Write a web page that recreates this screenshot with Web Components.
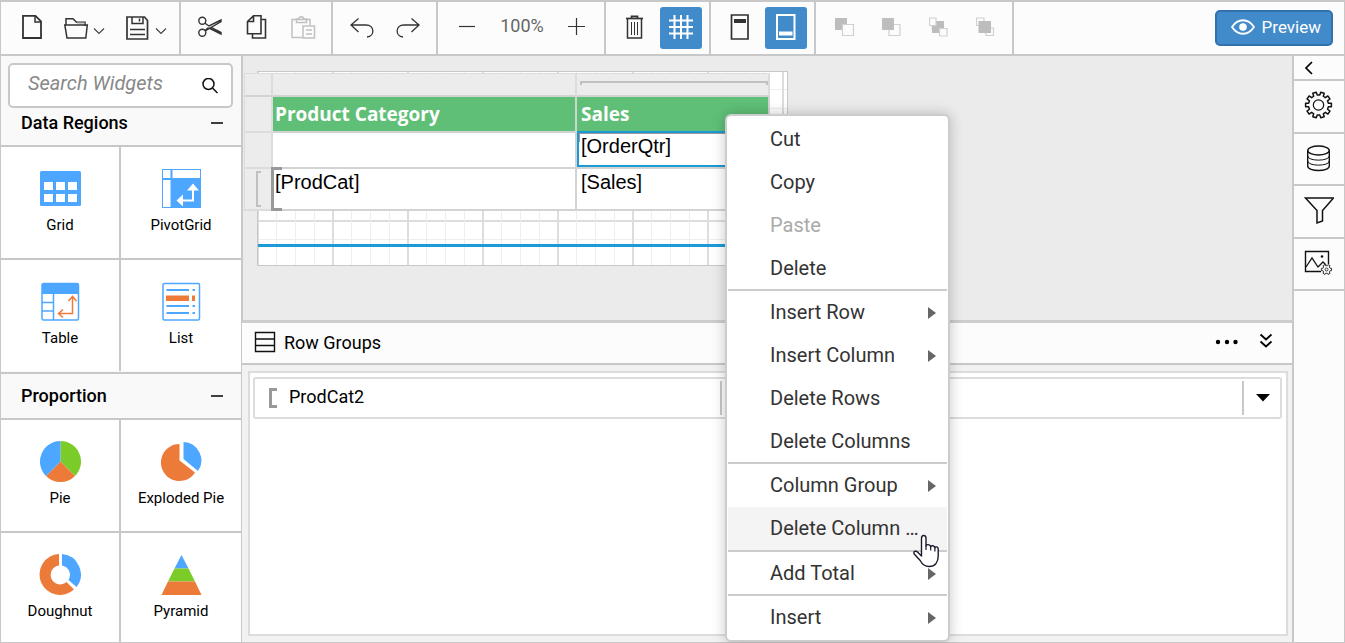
<!DOCTYPE html>
<html lang="en">
<head>
<meta charset="utf-8">
<title>Report Designer</title>
<style>
  html, body { height: 100%; margin: 0; }
  body {
    font-family: Roboto, "Liberation Sans", sans-serif;
    color: #000;
    --line: #c8c8c8;
    --soft: #dcdcdc;
    --bar: #fcfcfc;
    --accent: #428bca;
    --select: #1c9ad6;
    overflow: hidden;
  }
</style>
</head>
<body>
<report-designer></report-designer>

<script>
const svg = (w, h, body) =>
  `<svg width="${w}" height="${h}" viewBox="0 0 ${w} ${h}" fill="none" aria-hidden="true">${body}</svg>`;

/* Outline of a cog wheel with n teeth */
function cog(cx, cy, outer, inner, n) {
  const pts = [];
  const step = Math.PI * 2 / n;
  for (let i = 0; i < n; i++) {
    const a = i * step + step / 2 - Math.PI / 2;
    [[-0.30, inner], [-0.22, outer], [0.22, outer], [0.30, inner]].forEach(([t, r]) => {
      pts.push((cx + r * Math.cos(a + t * step)).toFixed(2) + ' ' + (cy + r * Math.sin(a + t * step)).toFixed(2));
    });
  }
  return 'M' + pts.join('L') + 'Z';
}

const ICONS = {
  'new': svg(22, 26, '<path d="M2 1.800h12.500L20 7.300V24H2z" stroke="#333" stroke-width="1.800"/><path d="M14 2v6h6" stroke="#333" stroke-width="1.500"/>'),
  open: svg(42, 26, '<path d="M3 11V4.800h7l3.500 3.500H22V12" stroke="#333" stroke-width="1.500"/><path d="M12 6.500l3 4h6.500v-2h-8z" fill="#ccc"/><path d="M1.800 11h22.500l-1.500 13H4z" stroke="#333" stroke-width="1.500"/><path d="M31 14.500l5 5 5-5" stroke="#444" stroke-width="1.200"/>'),
  save: svg(42, 26, '<path d="M2 3h17.500l3 3.500V25H2z" stroke="#333" stroke-width="1.700"/><path d="M7 3v6.500h11V3" stroke="#333" stroke-width="1.500"/><path d="M14.500 4.500v3" stroke="#333" stroke-width="1.500"/><path d="M5 15.500h15M5 20.500h15" stroke="#333" stroke-width="1.500"/><path d="M31 14.500l5 5 5-5" stroke="#444" stroke-width="1.200"/>'),
  cut: svg(24, 24, '<g stroke="#333" stroke-width="1.400"><circle cx="4.300" cy="5.800" r="3.500"/><circle cx="4.300" cy="17.700" r="3.500"/><path d="M7 8.200l4 2.800L23 5v1.500L7.200 16M7 15.500l3.500-3M12.500 12L23 17.500V19l-12-6"/></g>'),
  copy: svg(22, 26, '<g stroke="#333" stroke-width="1.600"><path d="M8.500 1.800H16v18H2.500V7.500zM8.500 2v5.500h-6"/><path d="M16.500 5.500h4V24H7.500v-4"/></g>'),
  paste: svg(26, 26, '<g stroke="#c0c0c0" stroke-width="1.500"><path d="M12 23.500H2V5.500h18V11"/><path d="M6.500 8.500V5H9a2.200 2.200 0 0 1 4.500 0h3v3.500z"/><path d="M13 12h11.500v12H13zM16 16h6M16 20h6"/></g>'),
  undo: svg(24, 24, '<path d="M8.500 3.500L1 10l7.500 7M1 10h15c9 0 9 11.500 1 12" stroke="#333" stroke-width="1.300"/>'),
  redo: svg(24, 24, '<path d="M15.500 3.500L23 10l-7.500 7M23 10H8c-9 0-9 11.500-1 12" stroke="#333" stroke-width="1.300"/>'),
  minus: svg(18, 18, '<path d="M1 8.500h16" stroke="#333" stroke-width="1.200"/>'),
  plus: svg(18, 18, '<path d="M0 8.500h17M8.500 0v17" stroke="#333" stroke-width="1.200"/>'),
  trash: svg(20, 26, '<path d="M1 4.500h17" stroke="#333" stroke-width="1.700"/><path d="M6.500 4V2.300h6V4" stroke="#333" stroke-width="1.700"/><path d="M2.500 5v19h14V5" stroke="#333" stroke-width="1.500"/><path d="M6.500 8v13M9.500 8v13M12.500 8v13" stroke="#333" stroke-width="1"/>'),
  grid: svg(26, 26, '<path d="M6.500 1v24M13 1v24M19.500 1v24M1 6.500h24M1 13h24M1 19.500h24" stroke="#fff" stroke-width="2"/>'),
  pagehead: svg(22, 28, '<path d="M2.500 2h16.500V26H2.500z" stroke="#333" stroke-width="1.700"/><path d="M5 6h12v4H5z" fill="#333"/>'),
  pagefoot: svg(22, 28, '<path d="M2 2h17.500v24H2z" stroke="#fff" stroke-width="2"/><path d="M4 18.500h13.500v4H4z" fill="#fff"/>'),
  order1: svg(20, 20, '<path d="M0 1h12v12H0z" fill="#bdbdbd"/><path d="M7.500 7.500h11v11h-11z" fill="#fcfcfc" stroke="#d0d0d0" stroke-width="1.200"/>'),
  order2: svg(20, 20, '<path d="M7 7.500h11v11H7z" stroke="#d0d0d0" stroke-width="1.200"/><path d="M0 1h12v12H0z" fill="#bdbdbd"/>'),
  order3: svg(20, 20, '<path d="M2.500 4H15v12H3z" fill="#bdbdbd"/><path d="M.5 1H7v7.500H.5zM10.500 11.500H18V19h-7.500z" fill="#fcfcfc" stroke="#d0d0d0" stroke-width="1.200"/>'),
  order4: svg(20, 20, '<path d="M.5 1H8v7.500H.5zM10 11h7.500v7.500H10z" stroke="#d0d0d0" stroke-width="1.200"/><path d="M2.500 4H15v12H2.500z" fill="#bdbdbd"/>'),
  eye: svg(24, 16, '<path d="M1 8C7-1 17-1 23 8 17 17 7 17 1 8z" stroke="#fff" stroke-width="1.800"/><circle cx="12" cy="8" r="3.800" fill="#fff"/>'),
  search: svg(16, 16, '<circle cx="6.500" cy="6" r="5.500" stroke="#111" stroke-width="1.500"/><path d="M10.500 10l5 5" stroke="#111" stroke-width="1.500"/>'),
  dash: svg(14, 4, '<path d="M1 2h12" stroke="#111" stroke-width="1.600"/>'),
  back: svg(10, 14, '<path d="M8 1L2 7l6 6" stroke="#000" stroke-width="1.700"/>'),
  gear: svg(30, 30, `<path d="${cog(14.5, 14, 13, 10, 10)}" stroke="#111" stroke-width="1.500" stroke-linejoin="round"/><circle cx="14.500" cy="14" r="5.200" stroke="#111" stroke-width="1.200"/>`),
  database: svg(30, 30, '<g stroke="#111" stroke-width="1.400"><ellipse cx="14.500" cy="6.500" rx="10.800" ry="4.500"/><path d="M3.700 6.500V22c0 6 21.600 6 21.600 0V6.500"/><path d="M3.700 12c0 5.500 21.600 5.500 21.600 0M3.700 17c0 5.500 21.600 5.500 21.600 0" stroke-width="1"/></g>'),
  funnel: svg(30, 30, '<path d="M1.500 2h28L18.500 14.500v10.500l-5.500 2V14.500z" stroke="#111" stroke-width="1.500"/>'),
  picture: svg(30, 30, `<path d="M17 22.500H1.500v-20h23V15" stroke="#111" stroke-width="1.400"/><path d="M2 18l6-9 6 9 5-5 3 3" stroke="#111" stroke-width="1.300"/><circle cx="18" cy="7.500" r="1.300" fill="#111"/><path d="${cog(22.5, 20.5, 5.2, 3.8, 6)}" stroke="#333" fill="#fcfcfc" stroke-width="1"/><circle cx="22.500" cy="20.500" r="1.500" stroke="#333"/>`),
  rows: svg(22, 22, '<path d="M1.500 1.500h19v19h-19zM1.500 8h19M1.500 14.500h19" stroke="#111" stroke-width="1.400"/>'),
  dots: svg(24, 6, '<g fill="#000"><circle cx="3" cy="3" r="2.200"/><circle cx="12" cy="3" r="2.200"/><circle cx="20.500" cy="3" r="2.200"/></g>'),
  collapse: svg(14, 16, '<path d="M1.500 1.500l5.500 5 5.500-5M1.500 8.500l5.500 5 5.500-5" stroke="#000" stroke-width="1.800"/>'),
  caret: svg(14, 8, '<path d="M0 0h14L7 7.500z" fill="#000"/>'),
  arrow: svg(8, 12, '<path d="M0 0l8 6-8 6z" fill="#666"/>'),
  bracket: svg(8, 20, '<path d="M8 1.500H1.500v17H8" stroke="#999" stroke-width="3"/>'),

  wGrid: svg(42, 42, '<rect x="1" y="3" width="41" height="35" rx="1.500" fill="#4da6ff"/><path d="M5 14h9v8H5zM17 14h9v8h-9zM29 14h9v8h-9zM5 26h9v8H5zM17 26h9v8h-9zM29 26h9v8h-9z" fill="#fff"/>'),
  wPivot: svg(42, 42, '<path d="M2 1h39v39H2z" fill="#4da6ff"/><path d="M3 2h7.500v8H3zM12.500 2H40v8H12.500zM3 12h7.500v27H3z" fill="#fff"/><path d="M33 19v13.500H22" stroke="#fff" stroke-width="2"/><path d="M33 15.500l6 7H27zM16.500 32.500l6.500-6v12z" fill="#fff"/>'),
  wTable: svg(42, 42, '<rect x="3" y="2.500" width="36.500" height="36.500" rx="1.500" stroke="#4da6ff" stroke-width="1.500"/><path d="M3 3h36.500v10H3z" fill="#4da6ff"/><path d="M14.500 13v26M3 21.500h11.500M3 30h11.500" stroke="#4da6ff" stroke-width="1.500"/><path d="M33.500 16v16.500H20M29.500 20l4-4.500 4 4.500M24 28.500l-4.500 4 4.500 4" stroke="#ee7a38" stroke-width="1.500"/>'),
  wList: svg(42, 42, '<rect x="3" y="2.500" width="36.500" height="36.500" rx="1.500" stroke="#4da6ff" stroke-width="1.500"/><path d="M6.500 9H29M32.500 9h2.500M6.500 25H29M32.500 25h2.500M6.500 32H29M32.500 32h2.500" stroke="#4da6ff" stroke-width="2"/><path d="M6 14.500h23v5.500H6zM32 14.500h3v5.500h-3z" fill="#ee7a38"/>'),
  wPie: svg(42, 42, '<g transform="translate(.500)"><path d="M21 20.500V0a20.500 20.500 0 0 1 14.500 35z" fill="#7bcc28"/><path d="M21 20.500L35.500 35a20.500 20.500 0 0 1-29 0z" fill="#ec7a38"/><path d="M21 20.500L6.500 35A20.500 20.500 0 0 1 21 0z" fill="#4da6ff"/></g>'),
  wExploded: svg(42, 42, '<path d="M19.500 3v16.500l15.500 12A18.500 18.500 0 1 1 19.500 3z" fill="#ec7a38"/><path d="M23.500 1a18.500 18.500 0 0 1 14.500 29L23.500 18z" fill="#4da6ff"/>'),
  wDoughnut: svg(42, 42, '<g transform="translate(1)"><path d="M19 0v11.500A9.500 9.500 0 1 0 26.500 28l7.500 7.500A20.500 20.500 0 1 1 19 0z" fill="#ec7a38"/><path d="M22 0a20.500 20.500 0 0 1 14.500 33L28.500 26A9.500 9.500 0 0 0 22 11.500z" fill="#4da6ff"/></g>'),
  wPyramid: svg(42, 42, '<path d="M21.500 1l7 13.500h-14z" fill="#4da6ff"/><path d="M14.500 14.500h14l6.500 13H8z" fill="#7bcc28"/><path d="M8 27.500h27l6.500 13.500h-40z" fill="#ec7a38"/>')
};

function define(name, render) {
  customElements.define(name, class extends HTMLElement {
    constructor() {
      super();
      this.attachShadow({ mode: 'open' });
    }
    connectedCallback() {
      if (this.shadowRoot.childNodes.length) return;
      const t = document.createElement('template');
      t.innerHTML = render(this);
      this.shadowRoot.append(t.content.cloneNode(true));
    }
  });
}

const RESET = `
  *, *::before, *::after { box-sizing: border-box; }
  button { font: inherit; color: inherit; background: none; border: 0; padding: 0; margin: 0; cursor: pointer; }
  svg { display: block; flex: none; }
`;

/* ---------- toolbar ---------- */
define('tool-button', el => `
  <style>${RESET}
    :host { display: block; }
    button { display: flex; align-items: center; justify-content: center; height: 42px; padding-bottom: 2px; border-radius: 3px; }
    :host([active]) button { width: 42px; background: var(--accent); }
  </style>
  <button type="button" aria-label="${el.getAttribute('label')}" ${el.hasAttribute('disabled') ? 'disabled' : ''}>${ICONS[el.getAttribute('icon')]}</button>`);

define('tool-group', () => `
  <style>${RESET}
    :host { display: flex; align-items: center; height: 52px; border-right: 2px solid var(--line); box-sizing: border-box; }
  </style>
  <slot></slot>`);

define('preview-button', () => `
  <style>${RESET}
    :host { display: block; margin-left: auto; margin-right: 11px; }
    button { display: flex; align-items: center; gap: 7px; height: 36px; padding: 0 10px 2px 14px; border: 2px solid #2f72ad; border-radius: 5px;
      background: var(--accent); color: #fff; font-size: 17px; line-height: 20px; }
  </style>
  <button type="button">${ICONS.eye}<span><slot></slot></span></button>`);

define('tool-bar', () => `
  <style>${RESET}
    :host { display: flex; align-items: center; height: 54px; background: var(--bar); border-bottom: 2px solid var(--line); box-sizing: border-box; }
    .file { padding-left: 20px; padding-right: 12px; gap: 20px; }
    .clip { padding-left: 17px; padding-right: 15px; gap: 23px; }
    .hist { padding-left: 17px; padding-right: 16px; gap: 22px; }
    .zoom { padding-left: 20px; padding-right: 18px; gap: 24px; }
    .edit { padding-left: 19px; padding-right: 7px; gap: 15px; }
    .page { padding-left: 18px; padding-right: 7px; gap: 14px; }
    .order { padding-left: 19px; padding-right: 16px; gap: 27px; }
    output { width: 44px; padding-bottom: 4px; text-align: center; font-size: 18px; line-height: 20px; color: #666; white-space: nowrap; }
  </style>
  <tool-group class="file">
    <tool-button icon="new" label="New"></tool-button>
    <tool-button icon="open" label="Open"></tool-button>
    <tool-button icon="save" label="Save"></tool-button>
  </tool-group>
  <tool-group class="clip">
    <tool-button icon="cut" label="Cut"></tool-button>
    <tool-button icon="copy" label="Copy"></tool-button>
    <tool-button icon="paste" label="Paste" disabled></tool-button>
  </tool-group>
  <tool-group class="hist">
    <tool-button icon="undo" label="Undo"></tool-button>
    <tool-button icon="redo" label="Redo"></tool-button>
  </tool-group>
  <tool-group class="zoom">
    <tool-button icon="minus" label="Zoom out"></tool-button>
    <output>100%</output>
    <tool-button icon="plus" label="Zoom in"></tool-button>
  </tool-group>
  <tool-group class="edit">
    <tool-button icon="trash" label="Delete"></tool-button>
    <tool-button icon="grid" label="Grid lines" active></tool-button>
  </tool-group>
  <tool-group class="page">
    <tool-button icon="pagehead" label="Header"></tool-button>
    <tool-button icon="pagefoot" label="Footer" active></tool-button>
  </tool-group>
  <tool-group class="order">
    <tool-button icon="order1" label="Send to back" disabled></tool-button>
    <tool-button icon="order2" label="Bring to front" disabled></tool-button>
    <tool-button icon="order3" label="Send backward" disabled></tool-button>
    <tool-button icon="order4" label="Bring forward" disabled></tool-button>
  </tool-group>
  <preview-button>Preview</preview-button>`);

/* ---------- widget panel ---------- */
define('widget-search', () => `
  <style>${RESET}
    :host { display: block; padding: 7px 8px 0 7px; }
    label { display: flex; align-items: center; height: 45px; padding: 0 13px 0 18px; background: #fff; border: 2px solid var(--line); border-radius: 5px; }
    input { flex: 1; min-width: 0; border: 0; outline: 0; padding: 0 0 6px; background: none; font: italic 20px/24px Roboto, "Liberation Sans", sans-serif; }
    input::placeholder { color: #888; opacity: 1; }
  </style>
  <label><input type="text" placeholder="Search Widgets" aria-label="Search Widgets">${ICONS.search}</label>`);

define('widget-tile', el => `
  <style>${RESET}
    :host { display: block; background: #fff; }
    button { display: flex; flex-direction: column; align-items: center; gap: 5px; width: 100%; height: 111px; padding-top: 21px; font-size: 15px; line-height: 20px; }
  </style>
  <button type="button">${ICONS[el.getAttribute('icon')]}<span><slot></slot></span></button>`);

define('widget-section', el => `
  <style>${RESET}
    :host { display: block; }
    h2 { margin: 0; font-size: 18px; font-weight: 500; line-height: 20px; }
    header { display: flex; align-items: center; justify-content: space-between; height: 48px; padding: 0 17px 0 20px; border-top: 2px solid var(--line); border-bottom: 2px solid var(--line); }
    :host([first]) header { height: 39px; padding-bottom: 7px; border-top: 0; }
    .tiles { display: grid; grid-template-columns: minmax(0, 118fr) minmax(0, 120fr); gap: 2px; background: var(--line); margin-bottom: 1px; }
  </style>
  <header><h2>${el.getAttribute('heading')}</h2><button type="button" aria-label="Collapse">${ICONS.dash}</button></header>
  <div class="tiles"><slot></slot></div>`);

define('widget-panel', () => `
  <style>${RESET}
    :host { display: block; width: 241px; flex: none; overflow: hidden; background: #f9f9f9; border-right: 1px solid var(--line); box-sizing: border-box; }
  </style>
  <widget-search></widget-search>
  <widget-section heading="Data Regions" first>
    <widget-tile icon="wGrid">Grid</widget-tile>
    <widget-tile icon="wPivot">PivotGrid</widget-tile>
    <widget-tile icon="wTable">Table</widget-tile>
    <widget-tile icon="wList">List</widget-tile>
  </widget-section>
  <widget-section heading="Proportion">
    <widget-tile icon="wPie">Pie</widget-tile>
    <widget-tile icon="wExploded">Exploded Pie</widget-tile>
    <widget-tile icon="wDoughnut">Doughnut</widget-tile>
    <widget-tile icon="wPyramid">Pyramid</widget-tile>
  </widget-section>`);

/* ---------- design surface ---------- */
define('tablix-grid', () => `
  <style>${RESET}
    :host { display: block; margin: 1px 0 0 -14px; width: 526px; }
    table { width: 100%; table-layout: fixed; border-collapse: separate; border-spacing: 0; font: 20px/24px "Liberation Sans", Arial, sans-serif; }
    th, td { padding: 0; text-align: left; vertical-align: top; border: 0 solid #d3d3d3; border-width: 0 2px 2px 0; background: #fff; position: relative; }
    .handle { background: #ececec; border-color: var(--soft); }
    tr > .handle:first-child { border-left-width: 1px; }
    thead .handle { border-top-width: 1px; border-bottom-color: #d3d3d3; }
    .c0 { width: 29px; } .c1 { width: 304px; }
    .h0 { height: 24px; } .h1 { height: 36px; } .h3 { height: 42px; }
    td, th.title { padding-left: 4px; }
    td:nth-child(2), th.title:nth-child(2) { padding-left: 2px; }
    td { padding-top: 1px; }
    th.title { background: #5fbf77; color: #fff; font: bold 19px/26px "Open Sans", "Noto Sans", sans-serif; padding-top: 4px; }
    .top { position: absolute; left: 3px; right: 0; top: 7px; height: 4px; border: 2px solid #c0c0c0; border-bottom: 0; }
    .left { position: absolute; left: 11px; top: 2px; bottom: 2px; width: 5px; border: 2px solid #c0c0c0; border-right: 0; }
    .group { position: absolute; left: -2px; top: -2px; bottom: -2px; width: 11px; border: 3px solid #999; border-right: 0; }
    .pick { position: absolute; inset: -2px -2px 0 0; border: 2px solid var(--select); }
    .pick::after { content: ""; position: absolute; left: 0; right: 0; top: 0; height: 9px; border: 1px solid #999; border-width: 1px 0 0 1px; }
  </style>
  <table>
    <colgroup><col class="c0"><col class="c1"><col></colgroup>
    <thead><tr class="h0"><td class="handle"></td><td class="handle"></td><td class="handle"><span class="top"></span></td></tr></thead>
    <tbody>
      <tr class="h1"><td class="handle"></td><th class="title">Product Category</th><th class="title">Sales</th></tr>
      <tr class="h1"><td class="handle"></td><td></td><td><span class="pick"></span>[OrderQtr]</td></tr>
      <tr class="h3"><td class="handle"><span class="left"></span></td><td><span class="group"></span>[ProdCat]</td><td>[Sales]</td></tr>
    </tbody>
  </table>`);

define('design-surface', () => `
  <style>${RESET}
    :host { display: block; height: 267px; flex: none; padding: 15px 14px; background: #ebebeb; border-left: 1px solid var(--line); border-bottom: 3px solid #cdcdcd; box-sizing: border-box; }
    .page { width: 531px; border: 1px solid var(--line); background: #fff; }
    .body, .foot {
      --v: linear-gradient(90deg, #ddd 0 1px, transparent 1px 18px, #eee 18px 19px, transparent 19px 37px, #eee 37px 38px, transparent 38px 56px, #eee 56px 57px, transparent 57px 74px, #ddd 74px);
      --h: linear-gradient(#0000 17px, #eee 17px 18px, #0000 18px 36px, #eee 36px 37px, #0000 37px 55px, #eee 55px 56px, #0000 56px 73px, #ddd 73px);
      background: var(--v), var(--h); background-size: 75px 75px;
    }
    .body { display: flow-root; height: 175px; border-bottom: 3px solid var(--select); }
    .foot { height: 18px; background: var(--v); background-size: 75px 75px; }
  </style>
  <div class="page"><div class="body"><tablix-grid></tablix-grid></div><div class="foot"></div></div>`);

/* ---------- row groups ---------- */
define('group-row', () => `
  <style>${RESET}
    :host { display: flex; align-items: center; height: 42px; border: 2px solid var(--soft); border-radius: 3px; padding-left: 14px; font-size: 18px; line-height: 20px; box-sizing: border-box; }
    .name { display: flex; align-items: center; gap: 12px; width: 453px; height: 34px; border-right: 2px solid var(--line); }
    .name span { padding-bottom: 2px; }
    button { display: flex; align-items: center; justify-content: center; margin-left: auto; width: 38px; height: 34px; padding-left: 2px; border-left: 2px solid var(--line); }
  </style>
  <div class="name">${ICONS.bracket}<span><slot></slot></span></div>
  <button type="button" aria-label="Group options">${ICONS.caret}</button>`);

define('group-panel', () => `
  <style>${RESET}
    :host { display: flex; flex-direction: column; flex: 1; min-height: 0; }
    header { display: flex; align-items: center; height: 42px; flex: none; padding: 0 19px 0 12px; background: var(--bar); border-bottom: 2px solid var(--line); }
    header > svg { margin-bottom: 2px; }
    h2 { margin: 0 auto 0 8px; font-size: 18px; font-weight: 400; line-height: 20px; }
    header button { padding-bottom: 4px; }
    header .more { margin-right: 20px; padding-bottom: 2px; }
    .body { flex: 1; min-height: 0; padding: 6px 4px 6px 6px; background: #f2f2f2; }
    .list { height: 100%; padding: 4px 4px 4px 3px; border: 2px solid var(--soft); background: #fff; }
  </style>
  <header>${ICONS.rows}<h2>Row Groups</h2>
    <button class="more" type="button" aria-label="More">${ICONS.dots}</button>
    <button type="button" aria-label="Collapse">${ICONS.collapse}</button></header>
  <div class="body"><div class="list"><group-row>ProdCat2</group-row></div></div>`);

/* ---------- right rail ---------- */
define('side-rail', () => `
  <style>${RESET}
    :host { display: flex; flex-direction: column; width: 52px; flex: none; background: var(--bar); border-left: 2px solid var(--line); box-sizing: border-box; }
    button { display: flex; align-items: center; justify-content: center; height: 52px; border-bottom: 2px solid var(--line); }
    .tall { height: 53px; padding-bottom: 2px; }
    .back { height: 25px; justify-content: flex-start; padding-left: 10px; }
  </style>
  <button class="back" type="button" aria-label="Expand">${ICONS.back}</button>
  <button class="tall" type="button" aria-label="Properties">${ICONS.gear}</button>
  <button type="button" aria-label="Data">${ICONS.database}</button>
  <button class="tall" type="button" aria-label="Parameters">${ICONS.funnel}</button>
  <button type="button" aria-label="Images">${ICONS.picture}</button>`);

/* ---------- context menu ---------- */
define('menu-item', el => `
  <style>${RESET}
    :host { display: block; }
    button { display: flex; align-items: center; justify-content: space-between; width: 100%; height: 43px; padding: 0 11px 0 42px; font-size: 20px; line-height: 24px; color: #333; text-align: left; white-space: nowrap; }
    span { padding-bottom: 2px; }
    button:disabled { color: #aaa; }
    :host([hover]) button { background: #f4f4f4; }
  </style>
  <button type="button" role="menuitem" ${el.hasAttribute('disabled') ? 'disabled' : ''}><span><slot></slot></span>${el.hasAttribute('sub') ? ICONS.arrow : ''}</button>`);

define('context-menu', () => `
  <style>${RESET}
    :host { display: block; width: 225px; padding: 2px 1px 1px; background: #fff; border: 2px solid #ccc; border-radius: 6px; box-shadow: 0 0 14px rgba(0, 0, 0, .22); box-sizing: border-box; }
    hr { height: 2px; margin: -1px 0 0; border: 0; background: #ccc; position: relative; }
    [hover] + hr { margin-top: 0; }
  </style>
  <div role="menu">
    <menu-item>Cut</menu-item>
    <menu-item>Copy</menu-item>
    <menu-item disabled>Paste</menu-item>
    <menu-item>Delete</menu-item>
    <hr>
    <menu-item sub>Insert Row</menu-item>
    <menu-item sub>Insert Column</menu-item>
    <menu-item>Delete Rows</menu-item>
    <menu-item>Delete Columns</menu-item>
    <hr>
    <menu-item sub>Column Group</menu-item>
    <menu-item hover>Delete Column …</menu-item>
    <hr>
    <menu-item sub>Add Total</menu-item>
    <hr>
    <menu-item sub>Insert</menu-item>
  </div>`);

define('hand-cursor', () => `
  <style>${RESET} :host { display: block; pointer-events: none; }</style>
  ${svg(28, 34, '<path d="M9.500 22V4.500c0-4 4.500-4 4.500 0V12c0-2 4.200-2 4.700.800.500-1.800 4-1.300 4.200 1 .700-1.600 3.300-1.100 3.300 1.200v7c0 6-3 10.500-9 10.500-5 0-7.500-3-9-6L2.200 20c-1.400-2.600 1.600-3.600 3.300-2z" fill="#fff" stroke="#1a1a2a" stroke-width="1.400" stroke-linejoin="round"/><path d="M14 11.500v4.500M18.700 12.500v4M22.900 13.500v4" stroke="#1a1a2a" stroke-width="1.200"/>')}`);

/* ---------- application ---------- */
define('report-designer', () => `
  <style>${RESET}
    :host { display: flex; flex-direction: column; height: 100vh; position: relative; box-sizing: border-box; border: 1px solid var(--line); border-top-width: 2px; background: var(--bar); }
    .work { display: flex; flex: 1; min-height: 0; }
    main { display: flex; flex-direction: column; flex: 1; min-width: 0; }
    context-menu { position: absolute; left: 724px; top: 112px; }
    hand-cursor { position: absolute; left: 911px; top: 532px; }
  </style>
  <tool-bar></tool-bar>
  <div class="work">
    <widget-panel></widget-panel>
    <main>
      <design-surface></design-surface>
      <group-panel></group-panel>
    </main>
    <side-rail></side-rail>
  </div>
  <context-menu></context-menu>
  <hand-cursor></hand-cursor>`);
</script>
</body>
</html>
